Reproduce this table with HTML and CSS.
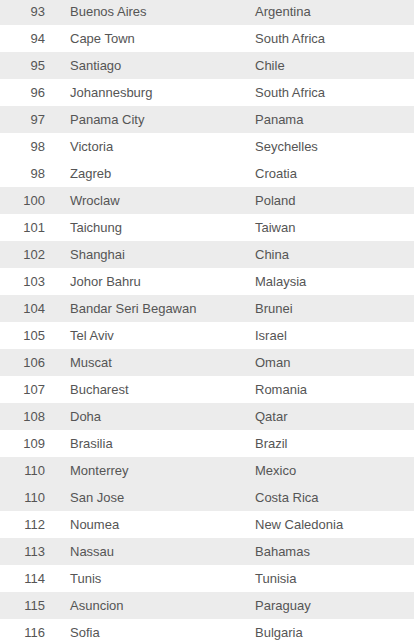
FILE: index.html
```html
<!DOCTYPE html>
<html>
<head>
<meta charset="utf-8">
<link rel="stylesheet" href="styles.css">
</head>
<body>
<table class="rank">
<tbody>
<tr class="g"><td class="n">93</td><td>Buenos Aires</td><td>Argentina</td></tr>
<tr><td class="n">94</td><td>Cape Town</td><td>South Africa</td></tr>
<tr class="g"><td class="n">95</td><td>Santiago</td><td>Chile</td></tr>
<tr><td class="n">96</td><td>Johannesburg</td><td>South Africa</td></tr>
<tr class="g"><td class="n">97</td><td>Panama City</td><td>Panama</td></tr>
<tr><td class="n">98</td><td>Victoria</td><td>Seychelles</td></tr>
<tr><td class="n">98</td><td>Zagreb</td><td>Croatia</td></tr>
<tr class="g"><td class="n">100</td><td>Wroclaw</td><td>Poland</td></tr>
<tr><td class="n">101</td><td>Taichung</td><td>Taiwan</td></tr>
<tr class="g"><td class="n">102</td><td>Shanghai</td><td>China</td></tr>
<tr><td class="n">103</td><td>Johor Bahru</td><td>Malaysia</td></tr>
<tr class="g"><td class="n">104</td><td>Bandar Seri Begawan</td><td>Brunei</td></tr>
<tr><td class="n">105</td><td>Tel Aviv</td><td>Israel</td></tr>
<tr class="g"><td class="n">106</td><td>Muscat</td><td>Oman</td></tr>
<tr><td class="n">107</td><td>Bucharest</td><td>Romania</td></tr>
<tr class="g"><td class="n">108</td><td>Doha</td><td>Qatar</td></tr>
<tr><td class="n">109</td><td>Brasilia</td><td>Brazil</td></tr>
<tr class="g"><td class="n">110</td><td>Monterrey</td><td>Mexico</td></tr>
<tr class="g"><td class="n">110</td><td>San Jose</td><td>Costa Rica</td></tr>
<tr><td class="n">112</td><td>Noumea</td><td>New Caledonia</td></tr>
<tr class="g"><td class="n">113</td><td>Nassau</td><td>Bahamas</td></tr>
<tr><td class="n">114</td><td>Tunis</td><td>Tunisia</td></tr>
<tr class="g"><td class="n">115</td><td>Asuncion</td><td>Paraguay</td></tr>
<tr><td class="n">116</td><td>Sofia</td><td>Bulgaria</td></tr>
</tbody>
</table>
</body>
</html>
```
FILE: styles.css
```css
html, body {
  margin: 0;
  padding: 0;
  background: #fff;
}
.rank {
  width: 414px;
  border-collapse: collapse;
  table-layout: fixed;
  font-family: "Liberation Sans", Arial, sans-serif;
  font-size: 13px;
  color: #555;
  margin-top: -2px;
}
.rank td {
  height: 27px;
  padding: 0 0 0 12px;
  vertical-align: middle;
  white-space: nowrap;
}
.rank td:nth-child(1) {
  width: 45px;
  padding: 0 13px 0 0;
  text-align: right;
}
.rank td:nth-child(2) {
  width: 173px;
}
.rank tr.g td {
  background: #ececec;
}
```
